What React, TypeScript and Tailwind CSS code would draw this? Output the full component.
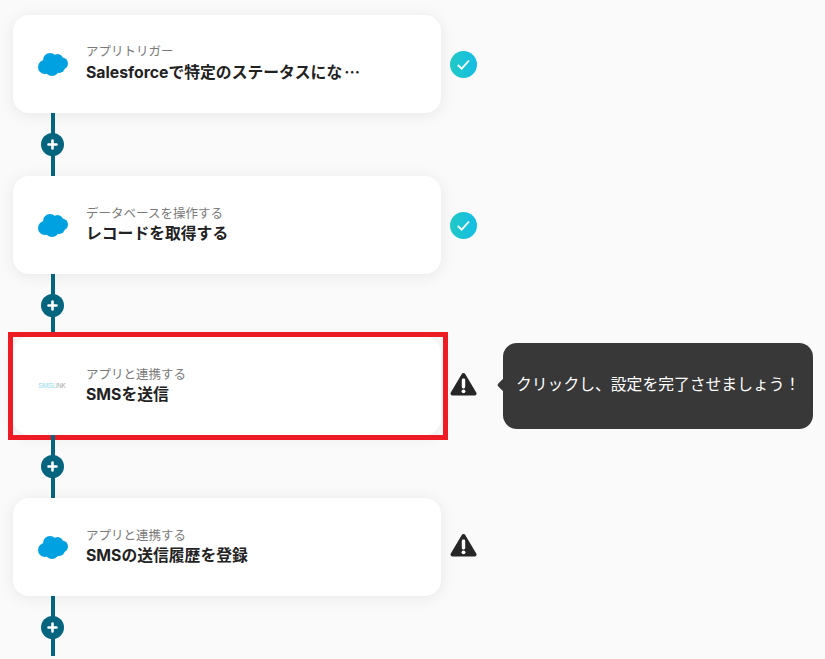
const fontFamily = "font-['Inter','Noto_Sans_CJK_JP',sans-serif]";

function SalesforceCloud() {
  return (
    <svg width="32" height="24" viewBox="0 0 32 24" className="shrink-0">
      <g fill="#00a1e0">
        <circle cx="8" cy="15" r="7" />
        <circle cx="13" cy="8" r="7" />
        <circle cx="20.5" cy="7.5" r="5.5" />
        <circle cx="25" cy="11.5" r="6" />
        <circle cx="15" cy="17" r="7" />
        <circle cx="22" cy="15" r="6" />
      </g>
    </svg>
  );
}

function SmsLogo() {
  return (
    <div className="w-[32px] h-[24px] flex items-center justify-center shrink-0 overflow-hidden pr-[2px]">
      <span className="text-[6.5px] leading-none tracking-tight whitespace-nowrap font-['Liberation_Sans',sans-serif]">
        <span className="text-[#8fd8e6]">SMSLI</span>
        <span className="text-[#a8a8a8]">NK</span>
      </span>
    </div>
  );
}

function CheckBadge() {
  return (
    <div className="w-[27px] h-[27px] rounded-full bg-gradient-to-r from-[#22c9c4] to-[#15bce6] flex items-center justify-center">
      <svg width="15" height="15" viewBox="0 0 15 15" fill="none" stroke="#fff" strokeWidth="1.8">
        <path d="M1.8 8l3.9 3.6L13 3.5" />
      </svg>
    </div>
  );
}

function WarnBadge() {
  return (
    <svg width="27" height="25" viewBox="0 0 27 25" className="mb-[4px]">
      <path d="M13.5 3L24.5 21.5H2.5Z" fill="#262626" stroke="#262626" strokeWidth="4" strokeLinejoin="round" />
      <rect x="11.8" y="6.5" width="3.4" height="10" rx="1.4" fill="#fff" />
      <circle cx="13.5" cy="19.3" r="1.9" fill="#fff" />
    </svg>
  );
}

function Connector({ last }: { last?: boolean }) {
  return (
    <div className={`w-[428px] pl-[28px] flex ${last ? "h-[60px]" : "h-[63px]"}`}>
      <div className="relative w-[23px] flex flex-col items-center">
        <div className="w-[4px] h-full bg-[#05657f]" />
        <div className="absolute top-[20px] left-0 w-[23px] h-[23px] rounded-full bg-[#05657f] flex items-center justify-center">
          <svg width="11" height="11" viewBox="0 0 11 11" stroke="#fff" strokeWidth="2.6" strokeLinecap="round">
            <path d="M5.5 1.5v8M1.5 5.5h8" />
          </svg>
        </div>
      </div>
    </div>
  );
}

type StepProps = {
  label: string;
  title: string;
  truncated?: boolean;
  done: boolean;
  logo: "salesforce" | "sms";
  active?: boolean;
};

function Step({ label, title, truncated, done, logo, active }: StepProps) {
  return (
    <div className="relative flex items-center">
      <div className="w-[428px] h-[98px] bg-white rounded-[16px] shadow-[0_2px_16px_rgba(0,0,0,0.08)] flex items-center pl-[24px]">
        {logo === "salesforce" ? <SalesforceCloud /> : <SmsLogo />}
        <div className="ml-[17px] mb-[1px] flex flex-col">
          <span className="text-[12.5px] leading-[18px] text-[#7a7a7a]">{label}</span>
          <span className="text-[15.8px] leading-[22px] font-bold text-[#222]">
            {title}
            {truncated && <span className="ml-[2px] font-['Noto_Sans_CJK_JP',sans-serif]">…</span>}
          </span>
        </div>
      </div>
      <div className="ml-[9px] w-[27px] flex items-center justify-center">
        {done ? <CheckBadge /> : <WarnBadge />}
      </div>
      {active && (
        <>
          <div className="absolute left-[-5px] top-[-5px] w-[440px] h-[108px] border-[5px] border-[#ed1c24]" />
          <div className="absolute left-[490px] top-[6px] w-[310px] h-[86px] bg-[#383838] rounded-[14px] flex items-center pl-[13px] pb-[3px] text-[15.8px] text-white whitespace-nowrap">
            <div className="absolute left-[-4px] top-[37px] w-[10px] h-[10px] rotate-45 rounded-[2px] bg-[#383838]" />
            <span className="relative">クリックし、設定を完了させましょう！</span>
          </div>
        </>
      )}
    </div>
  );
}

export default function App() {
  return (
    <div className={`h-[659px] overflow-hidden bg-[#fafafa] pt-[15px] pl-[13px] ${fontFamily}`}>
      <Step logo="salesforce" label="アプリトリガー" title="Salesforceで特定のステータスにな" truncated done />
      <Connector />
      <Step logo="salesforce" label="データベースを操作する" title="レコードを取得する" done />
      <Connector />
      <Step logo="sms" label="アプリと連携する" title="SMSを送信" done={false} active />
      <Connector />
      <Step logo="salesforce" label="アプリと連携する" title="SMSの送信履歴を登録" done={false} />
      <Connector last />
    </div>
  );
}
